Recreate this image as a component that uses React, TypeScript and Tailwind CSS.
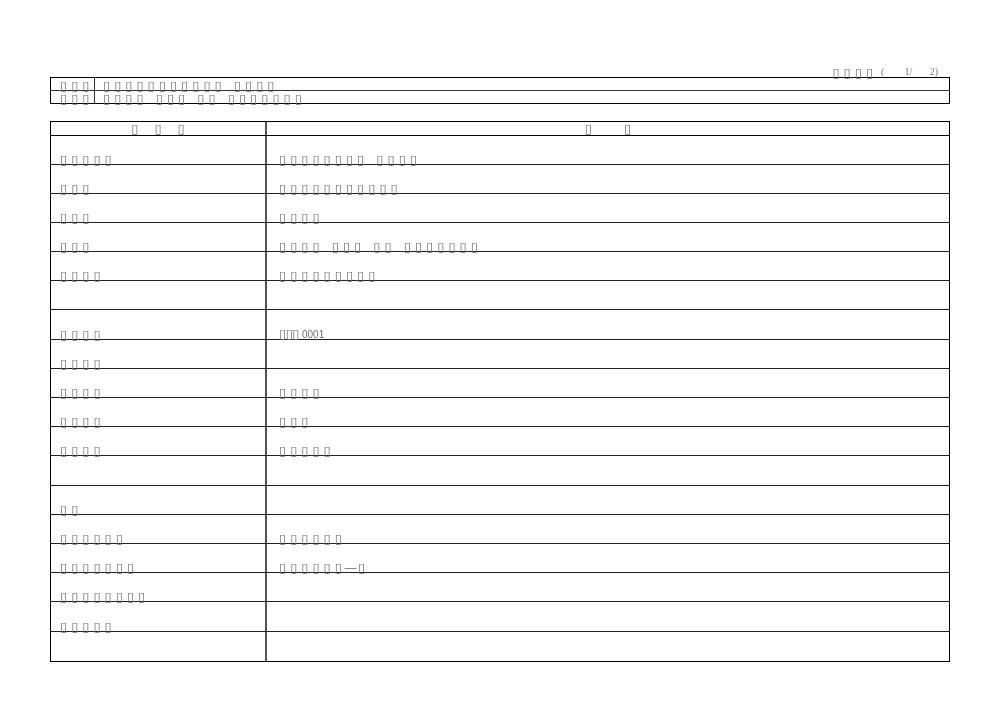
import React from 'react';

// tofu glyphs as in the source print
const T = (n: number) => '▯'.repeat(n);

const Num: React.FC<{ children: React.ReactNode }> = ({ children }) => (
  <span className="ml-[3px] font-['Liberation_Sans',sans-serif] text-[10px] tracking-normal text-[#6f6f6f]">{children}</span>
);

const Narrow: React.FC<{ children: React.ReactNode }> = ({ children }) => (
  <span className="tracking-[-0.5px]">{children}</span>
);

const rows: { left: string; right: React.ReactNode; h: string }[] = [
  { left: T(5), right: `${T(8)} ${T(4)}`, h: 'h-[29px]' },
  { left: T(3), right: T(11), h: 'h-[29px]' },
  { left: T(3), right: T(4), h: 'h-[29px]' },
  { left: T(3), right: `${T(4)} ${T(3)} ${T(2)} ${T(7)}`, h: 'h-[29px]' },
  { left: T(4), right: T(9), h: 'h-[29px]' },
  { left: '', right: '', h: 'h-[29px]' },
  { left: T(4), right: <><Narrow>{T(3)}</Narrow><Num>0001</Num></>, h: 'h-[30px]' },
  { left: T(4), right: '', h: 'h-[29px]' },
  { left: T(4), right: T(4), h: 'h-[29px]' },
  { left: T(4), right: T(3), h: 'h-[29px]' },
  { left: T(4), right: T(5), h: 'h-[29px]' },
  { left: '', right: '', h: 'h-[30px]' },
  { left: T(2), right: '', h: 'h-[29px]' },
  { left: T(6), right: T(6), h: 'h-[29px]' },
  {
    left: T(7),
    right: <>{T(6)}<span className="tracking-normal -ml-[2px] mr-[1px]">—</span>{T(1)}</>,
    h: 'h-[29px]',
  },
  { left: T(8), right: '', h: 'h-[29px]' },
  { left: T(5), right: '', h: 'h-[30px]' },
  { left: '', right: '', h: 'h-[29px]' },
];

const Cell: React.FC<{ text: React.ReactNode; className?: string }> = ({ text, className = '' }) => (
  <div className={`flex items-end ${className}`}>
    <span className="whitespace-pre text-[13px] leading-[12px] tracking-[4px] text-[#757575] translate-y-[2px]">
      {text}
    </span>
  </div>
);

export default function App() {
  return (
    <div className="w-[1000px] h-[707px] bg-white px-[50px] pt-[66px] font-['DejaVu_Sans',sans-serif] grayscale">
      <div className="flex justify-end pr-[12px] h-[11px] items-end">
        <span className="whitespace-pre text-[13px] leading-[12px] tracking-[4px] text-[#757575] translate-y-[2px]">
          {T(4)}
        </span>
        <span className="whitespace-pre font-['Liberation_Serif',serif] text-[10px] leading-[11px] text-[#777] ml-[4px]">
          {'(        1/       2)'}
        </span>
      </div>

      {/* title block */}
      <div className="border-[1.5px] border-black">
        <div className="grid grid-cols-[44px_1fr] h-[13px] border-b border-[#333]">
          <div className="border-r border-[#333] pl-[9px]">
            <Cell text={T(3)} className="h-full" />
          </div>
          <Cell text={`${T(11)} ${T(4)}`} className="h-full pl-[8px]" />
        </div>
        <div className="grid grid-cols-[44px_1fr] h-[12px]">
          <div className="border-r border-[#333] pl-[9px]">
            <Cell text={T(3)} className="h-full" />
          </div>
          <Cell text={`${T(4)} ${T(3)} ${T(2)} ${T(7)}`} className="h-full pl-[8px]" />
        </div>
      </div>

      {/* item table */}
      <div className="mt-[17px] border-[1.5px] border-black">
        <div className="grid grid-cols-[216px_1fr] h-[14px] border-b border-black">
          <div className="border-r-2 border-[#555] flex justify-center items-center gap-[16px] text-[13px] leading-[12px] text-[#757575]">
            <span>▯</span>
            <span>▯</span>
            <span>▯</span>
          </div>
          <div className="flex justify-center items-center gap-[32px] text-[13px] leading-[12px] text-[#757575]">
            <span>▯</span>
            <span>▯</span>
          </div>
        </div>
        {rows.map((r, i) => (
          <div
            key={i}
            className={`grid grid-cols-[216px_1fr] ${r.h} ${
              i < rows.length - 1 ? 'border-b border-[#222]' : ''
            }`}
          >
            <div className="border-r-2 border-[#555] pl-[9px]">
              <Cell text={r.left} className="h-full" />
            </div>
            <Cell text={r.right} className="h-full pl-[12px]" />
          </div>
        ))}
      </div>
    </div>
  );
}
